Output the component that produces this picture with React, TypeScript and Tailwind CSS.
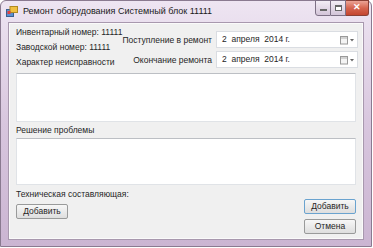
import React from "react";

const CalIcon = () => (
  <svg width="16" height="10" viewBox="0 0 16 10">
    <rect x="1.5" y="1.5" width="7" height="7.5" fill="#f4f4f4" stroke="#9a9a9a" />
    <line x1="2" y1="3" x2="8" y2="3" stroke="#b0b0b0" />
    <path d="M11 4 L15 4 L13 6.5 Z" fill="#666" />
  </svg>
);

const DatePicker = ({ text }: { text: string }) => (
  <div className="flex h-[17px] w-[142px] items-center justify-between border border-[#dadde2] bg-white pl-[5px] pr-[2px]">
    <span className="whitespace-pre">{text}</span>
    <CalIcon />
  </div>
);

const Btn = ({ label, active }: { label: string; active?: boolean }) => (
  <div
    className={`flex h-[15px] w-[52px] items-center justify-center rounded-[2px] border ${
      active ? "border-[#6aa3cf]" : "border-[#999a9a]"
    } bg-gradient-to-b from-[#f7f7f7] to-[#dedede] text-[8.5px]`}
  >
    {label}
  </div>
);

export default function App() {
  return (
    <div
      className="h-[248px] w-[373px] whitespace-nowrap bg-white"
      style={{ fontFamily: '"Liberation Sans", Arial, sans-serif' }}
    >
      <div className="relative flex h-[247px] w-[372px] flex-col rounded-t-[6px] border border-[#8a7a90] bg-gradient-to-b from-[#eee5f2] via-[#d8c6de] to-[#cbb5d2]">
        {/* Title bar */}
        <div className="flex h-[21px] items-center pl-[5px]">
          <svg width="12" height="11" viewBox="0 0 12 11" className="mr-[5px]">
            <rect x="0.5" y="3.5" width="7" height="7" fill="#5a8fd0" stroke="#3a5f90" />
            <rect x="4" y="0.5" width="7.5" height="6" fill="#f0c040" stroke="#b08a20" />
            <rect x="1.5" y="5" width="3" height="3" fill="#e04040" />
          </svg>
          <span className="text-[9px] text-[#1a1a1a]">Ремонт оборудования Системный блок 11111</span>
        </div>
        {/* Window controls */}
        <div className="absolute right-[2px] top-[-1px] flex h-[16px]">
          <div className="flex w-[16px] items-center justify-center rounded-bl-[3px] border border-[#7d7085] bg-gradient-to-b from-[#f3edf5] to-[#d3c4d8]">
            <div className="mt-[4px] h-[2px] w-[7px] border border-[#666] bg-white" />
          </div>
          <div className="flex w-[15px] items-center justify-center border-y border-r border-[#7d7085] bg-gradient-to-b from-[#f3edf5] to-[#d3c4d8]">
            <div className="h-[6px] w-[7px] border border-t-2 border-[#666] bg-white" />
          </div>
          <div className="flex w-[23px] items-center justify-center rounded-br-[3px] border-y border-r border-[#8a4035] bg-gradient-to-b from-[#eba395] via-[#d6654f] to-[#c4452f] text-[9px] font-bold text-white">
            ✕
          </div>
        </div>
        {/* Client area */}
        <div className="mx-[7px] mb-[6px] flex flex-1 flex-col border border-[#a898ae] bg-[#f0f0f0] px-[7px] text-[8.5px] text-[#262626] shadow-[inset_0_0_0_1px_#fafafa]">
          <div className="flex">
            <div className="flex flex-col pt-[2px] leading-[15px]">
              <span>Инвентарный номер: 11111</span>
              <span>Заводской номер: 11111</span>
              <span>Характер неисправности</span>
            </div>
            <div className="ml-auto mt-[8px] grid grid-cols-[auto_142px] gap-x-[4px] gap-y-[1px]">
              <span className="self-center text-right">Поступление в ремонт</span>
              <DatePicker text="2  апреля  2014 г." />
              <span className="self-center text-right">Окончание ремонта</span>
              <DatePicker text="2  апреля  2014 г." />
            </div>
          </div>
          <div className="mt-[3px] h-[49px] border border-[#e0e3e7] border-t-[#bcbfc4] bg-white" />
          <span className="mt-[1px] leading-[14px]">Решение проблемы</span>
          <div className="mt-[1px] h-[47px] border border-[#e0e3e7] border-t-[#bcbfc4] bg-white" />
          <div className="mt-[2px] flex justify-between">
            <div className="flex flex-col">
              <span className="leading-[14px]">Техническая составляющая:</span>
              <div className="mt-[3px]">
                <Btn label="Добавить" />
              </div>
            </div>
            <div className="flex flex-col gap-[5px] pt-[12px]">
              <Btn label="Добавить" active />
              <Btn label="Отмена" />
            </div>
          </div>
        </div>
      </div>
    </div>
  );
}
